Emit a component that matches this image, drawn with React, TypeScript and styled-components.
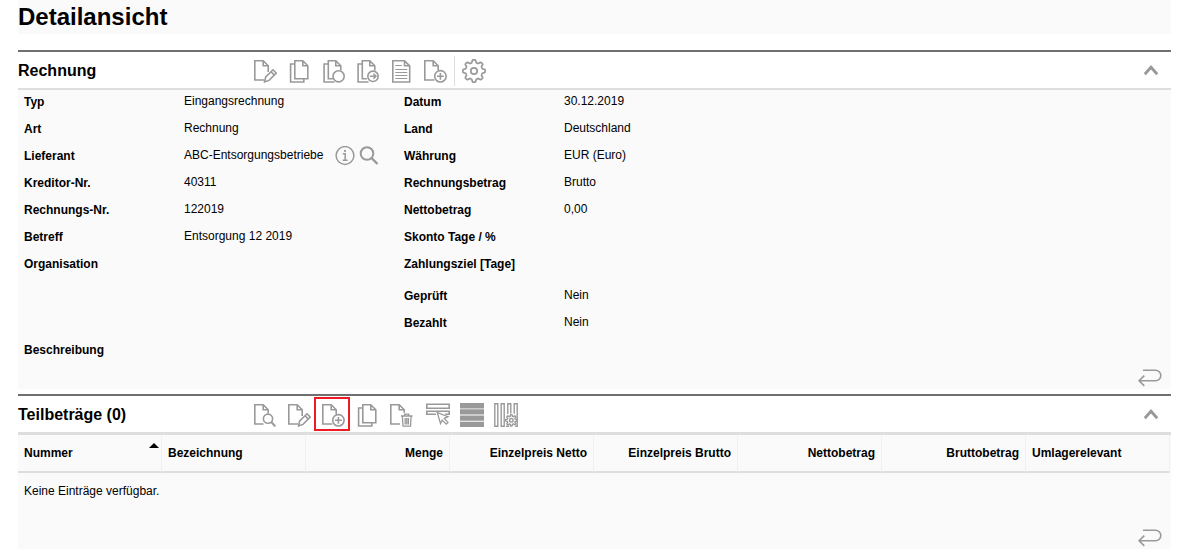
import React from 'react';
import styled, { createGlobalStyle, css } from 'styled-components';

const GlobalStyle = createGlobalStyle`
  *, *::before, *::after { box-sizing: border-box; }
  body {
    margin: 0;
    background: #fff;
    color: #000;
    font: 12px/23px "Liberation Sans", Arial, sans-serif;
  }
`;

const Page = styled.main`
  padding: 0 10px 0 18px;
`;

const PageTitle = styled.h1`
  margin: 0 0 16px;
  background: #fafafa;
  font-size: 24px;
  line-height: 34px;
`;

const Panel = styled.section`
  margin-bottom: 5px;
  border-top: 2px solid #707070;
`;

const PanelHeader = styled.header<{ $line: number }>`
  display: flex;
  align-items: center;
  border-bottom: ${(p) => p.$line}px solid #dedede;
`;

const PanelTitle = styled.h2`
  width: 230px;
  margin: 0;
  padding-top: 2px;
  font-size: 16px;
  line-height: 34px;
`;

const Toolbar = styled.div`
  display: flex;
  align-items: center;
  padding-top: 2px;
`;

const IconButton = styled.button`
  display: flex;
  align-items: center;
  justify-content: center;
  padding: 0;
  border: 0;
  background: none;
  color: #999;
  cursor: pointer;
`;

const ToolButton = styled(IconButton)<{ $marked?: boolean; $group?: boolean }>`
  position: relative;
  width: 34px;
  height: 34px;
  margin-left: ${(p) => (p.$group ? 3 : 0)}px;
  ${(p) =>
    p.$marked &&
    css`
      &::after {
        content: '';
        position: absolute;
        inset: -1px 0 1px -2px;
        border: 2px solid #ed1c24;
      }
    `}
`;

const Divider = styled.span`
  width: 1px;
  height: 30px;
  margin: 0 2px;
  background: #dedede;
`;

const CollapseButton = styled(IconButton)`
  margin-left: auto;
  width: 40px;
  height: 34px;
`;

const PanelBody = styled.div`
  background: #fafafa;
`;

const Columns = styled.div`
  display: grid;
  grid-template-columns: 380px 1fr;
  padding-left: 6px;
`;

const FieldList = styled.dl`
  display: flex;
  flex-direction: column;
  gap: 4px;
  margin: 0;
`;

const Field = styled.div<{ $spaced?: boolean }>`
  display: grid;
  grid-template-columns: 160px 1fr;
  height: 23px;
  margin-top: ${(p) => (p.$spaced ? 5 : 0)}px;
`;

const Label = styled.dt`
  font-weight: bold;
  line-height: 25px;
`;

const Value = styled.dd`
  display: flex;
  align-items: center;
  height: 23px;
  margin: 0;
`;

const ValueButton = styled(IconButton)`
  margin-left: 12px;
  & + & {
    margin-left: 4px;
  }
`;

const WideField = styled(FieldList)`
  padding: 4px 0 0 6px;
`;

const PanelFooter = styled.footer<{ $gap: number }>`
  display: flex;
  justify-content: flex-end;
  padding: ${(p) => p.$gap}px 9px 2px 0;
`;

const Table = styled.table`
  width: calc(100% - 1px);
  table-layout: fixed;
  border-collapse: separate;
  border-spacing: 0;
`;

const HeadCell = styled.th<{ $right?: boolean }>`
  position: relative;
  padding: 0 6px;
  border-right: 1px solid #f0f0f0;
  border-bottom: 2px solid #dedede;
  line-height: 36px;
  text-align: ${(p) => (p.$right ? 'right' : 'left')};
  white-space: nowrap;
`;

const SortButton = styled.button`
  width: 100%;
  padding: 0;
  border: 0;
  background: none;
  color: inherit;
  font: inherit;
  text-align: left;
  cursor: pointer;
  &::after {
    content: '';
    position: absolute;
    top: 8px;
    right: 2px;
    border: 5px solid transparent;
    border-top: 0;
    border-bottom: 5px solid #000;
  }
`;

const EmptyCell = styled.td`
  padding: 0 6px;
  line-height: 36px;
`;

const Svg = ({ children, w = 24, h = 24, s = 1.6 }: { children: React.ReactNode; w?: number; h?: number; s?: number }) => (
  <svg width={w} height={h} viewBox={`0 0 ${w} ${h}`} fill="none" stroke="currentColor" strokeWidth={s} aria-hidden="true">
    {children}
  </svg>
);

const gearPath = (cx: number, cy: number, r: number, depth: number) => {
  const pts: string[] = [];
  for (let i = 0; i <= 96; i++) {
    const a = (i / 96) * Math.PI * 2;
    const wave = Math.max(-1, Math.min(1, Math.cos(a * 8) * 1.8));
    const rad = r + depth * wave;
    pts.push(`${(cx + rad * Math.cos(a)).toFixed(2)} ${(cy + rad * Math.sin(a)).toFixed(2)}`);
  }
  return `M${pts.join('L')}Z`;
};

const EditIcon = () => (
  <Svg>
    <path d="M11 21H1.8V1.8h8.4l5 5V13M10.2 1.8v5h5" />
    <path d="m11.6 22.9 1.1-4.9 7.3-7.2 3.3 3.3-7.3 7.3zM18 12.8l3.3 3.3" />
  </Svg>
);
const CopyIcon = () => (
  <Svg>
    <path d="M7.8 5H3.6v18h13.2v-3.2" />
    <path d="M7.8 1.8h8l5 5v13h-13zM15.8 1.8v5h5" />
  </Svg>
);
const CopyBase = () => <path d="M7.3 5H3.1v18h10.4M11.8 19.8H7.3v-18h7.5l5 5v4.7M14.8 1.8v5h5" />;
const CopyStateIcon = () => (
  <Svg>
    <CopyBase />
    <circle cx="17.6" cy="17.3" r="5.6" />
  </Svg>
);
const CopyForwardIcon = () => (
  <Svg>
    <CopyBase />
    <circle cx="18" cy="17.3" r="5.2" />
    <path d="M14.8 17.3h6M18.4 14.8l2.6 2.5-2.6 2.5" strokeWidth="1.5" />
  </Svg>
);
const ListDocIcon = () => (
  <Svg>
    <path d="M3.8 1.8h11.7l5.2 5V23H3.8zM15.5 1.8v5h5.2" />
    <path d="M6.3 6.5h6.5M6.3 10.5h12M6.3 13.5h12M6.3 16.5h12M6.3 19.5h12" strokeWidth="1" />
  </Svg>
);
const AddIcon = () => (
  <Svg>
    <path d="M11.3 21H1.8V1.8h8.4l5 5v4.5M10.2 1.8v5h5" />
    <circle cx="17.4" cy="17.3" r="5.7" />
    <path d="M14 17.3h6.8M17.4 13.9v6.8" />
  </Svg>
);
const GearIcon = () => (
  <Svg s={1.7}>
    <path d={gearPath(12, 12, 9.8, 1.3)} strokeLinejoin="round" />
    <circle cx="12" cy="12" r="3.2" />
  </Svg>
);
const ViewIcon = () => (
  <Svg>
    <path d="M10.5 21H1.8V1.8h8.4l5 5v3.7M10.2 1.8v5h5" />
    <circle cx="15" cy="15.7" r="4.6" />
    <path d="m18.3 19 4 4.4" strokeWidth="2" />
  </Svg>
);
const DeleteIcon = () => (
  <Svg>
    <path d="M11 21H1.8V1.8h8.4l5 5v3M10.2 1.8v5h5" />
    <path d="M12 13h11.5M15.7 13v-1.8h4V13M13.4 13.5l.6 9.7h7.5l.6-9.7M16.2 15v6.5M17.8 15v6.5M19.4 15v6.5" strokeWidth="1.3" />
  </Svg>
);
const SelectIcon = () => (
  <Svg>
    <path d="M.8 1.3h22.4v4H.8zM10 11.3H.8v-3h22.4v3h-4" />
    <path d="m11.3 9.7 10.7 4-3.7 1.7 3.7 4-1.8 1.7-4-4-1.7 3.4z" fill="#fff" strokeWidth="1.3" />
  </Svg>
);
const RowsIcon = () => (
  <Svg>
    <path d="M0 0h24v5.4H0zM0 6.3h24v5.3H0zM0 12.5h24v5.3H0zM0 18.7h24v5.3H0z" fill="currentColor" stroke="none" />
  </Svg>
);
const ColumnsIcon = () => (
  <Svg s={1.4}>
    <path d="M.8.8h3v22.4h-3zM7.2.8h3v22.4h-3zM13.8 11V.8h3v9.8M20.2 10.8V.8h3v22.4h-2M12 23.2h3" />
    <path d={gearPath(17.3, 17.3, 4.9, 0.8)} fill="#fff" />
    <circle cx="17.3" cy="17.3" r="1.8" />
  </Svg>
);
const InfoIcon = () => (
  <Svg w={20} h={20} s={1.5}>
    <circle cx="10" cy="9.5" r="8.9" />
    <path d="M7.8 7.8h2.4v6.4M7.6 14.2h5" />
    <circle cx="10" cy="4.9" r="1.1" fill="currentColor" stroke="none" />
  </Svg>
);
const SearchIcon = () => (
  <Svg w={20} h={20} s={2}>
    <circle cx="8" cy="7.5" r="6.3" />
    <path d="m12.5 12 6 6" strokeWidth="2.4" />
  </Svg>
);
const ChevronIcon = () => (
  <Svg w={16} h={12} s={2.8}>
    <path d="m1.8 10.2 6.2-7 6.2 7" />
  </Svg>
);
const ReturnIcon = () => (
  <Svg w={24} h={18}>
    <path d="M5 1.2h12.5a5.3 5.3 0 0 1 0 10.6H1.2M6.3 6.6l-5.2 5.2 5.2 5.1" />
  </Svg>
);

const leftFields: [string, string][] = [
  ['Typ', 'Eingangsrechnung'],
  ['Art', 'Rechnung'],
  ['Lieferant', 'ABC-Entsorgungsbetriebe'],
  ['Kreditor-Nr.', '40311'],
  ['Rechnungs-Nr.', '122019'],
  ['Betreff', 'Entsorgung 12 2019'],
  ['Organisation', ''],
];

const rightFields: [string, string][] = [
  ['Datum', '30.12.2019'],
  ['Land', 'Deutschland'],
  ['Währung', 'EUR (Euro)'],
  ['Rechnungsbetrag', 'Brutto'],
  ['Nettobetrag', '0,00'],
  ['Skonto Tage / %', ''],
  ['Zahlungsziel [Tage]', ''],
  ['Geprüft', 'Nein'],
  ['Bezahlt', 'Nein'],
];

const amountColumns = ['Menge', 'Einzelpreis Netto', 'Einzelpreis Brutto', 'Nettobetrag', 'Bruttobetrag'];

export default function App() {
  return (
    <>
      <GlobalStyle />
      <Page>
        <PageTitle>Detailansicht</PageTitle>

        <Panel>
          <PanelHeader $line={2}>
            <PanelTitle>Rechnung</PanelTitle>
            <Toolbar>
              <ToolButton aria-label="Bearbeiten"><EditIcon /></ToolButton>
              <ToolButton aria-label="Kopieren"><CopyIcon /></ToolButton>
              <ToolButton aria-label="Kopie mit Status"><CopyStateIcon /></ToolButton>
              <ToolButton aria-label="Kopie weiterleiten"><CopyForwardIcon /></ToolButton>
              <ToolButton aria-label="Bericht"><ListDocIcon /></ToolButton>
              <ToolButton aria-label="Neu"><AddIcon /></ToolButton>
              <Divider />
              <ToolButton aria-label="Einstellungen"><GearIcon /></ToolButton>
            </Toolbar>
            <CollapseButton aria-label="Einklappen"><ChevronIcon /></CollapseButton>
          </PanelHeader>
          <PanelBody>
            <Columns>
              <FieldList>
                {leftFields.map(([label, value]) => (
                  <Field key={label}>
                    <Label>{label}</Label>
                    <Value>
                      {value}
                      {label === 'Lieferant' && (
                        <>
                          <ValueButton aria-label="Information"><InfoIcon /></ValueButton>
                          <ValueButton aria-label="Suchen"><SearchIcon /></ValueButton>
                        </>
                      )}
                    </Value>
                  </Field>
                ))}
              </FieldList>
              <FieldList>
                {rightFields.map(([label, value]) => (
                  <Field key={label} $spaced={label === 'Geprüft'}>
                    <Label>{label}</Label>
                    <Value>{value}</Value>
                  </Field>
                ))}
              </FieldList>
            </Columns>
            <WideField>
              <Field>
                <Label>Beschreibung</Label>
                <Value />
              </Field>
            </WideField>
            <PanelFooter $gap={8}>
              <IconButton aria-label="Zurück"><ReturnIcon /></IconButton>
            </PanelFooter>
          </PanelBody>
        </Panel>

        <Panel>
          <PanelHeader $line={3}>
            <PanelTitle>Teilbeträge (0)</PanelTitle>
            <Toolbar>
              <ToolButton aria-label="Anzeigen"><ViewIcon /></ToolButton>
              <ToolButton aria-label="Bearbeiten"><EditIcon /></ToolButton>
              <ToolButton aria-label="Neu" $marked><AddIcon /></ToolButton>
              <ToolButton aria-label="Kopieren"><CopyIcon /></ToolButton>
              <ToolButton aria-label="Löschen"><DeleteIcon /></ToolButton>
              <ToolButton aria-label="Auswählen" $group><SelectIcon /></ToolButton>
              <ToolButton aria-label="Zeilen"><RowsIcon /></ToolButton>
              <ToolButton aria-label="Spalten anpassen"><ColumnsIcon /></ToolButton>
            </Toolbar>
            <CollapseButton aria-label="Einklappen"><ChevronIcon /></CollapseButton>
          </PanelHeader>
          <PanelBody>
            <Table>
              <thead>
                <tr>
                  <HeadCell aria-sort="ascending"><SortButton>Nummer</SortButton></HeadCell>
                  <HeadCell>Bezeichnung</HeadCell>
                  {amountColumns.map((name) => (
                    <HeadCell key={name} $right>{name}</HeadCell>
                  ))}
                  <HeadCell>Umlagerelevant</HeadCell>
                </tr>
              </thead>
              <tbody>
                <tr>
                  <EmptyCell colSpan={8}>Keine Einträge verfügbar.</EmptyCell>
                </tr>
              </tbody>
            </Table>
            <PanelFooter $gap={20}>
              <IconButton aria-label="Zurück"><ReturnIcon /></IconButton>
            </PanelFooter>
          </PanelBody>
        </Panel>
      </Page>
    </>
  );
}
